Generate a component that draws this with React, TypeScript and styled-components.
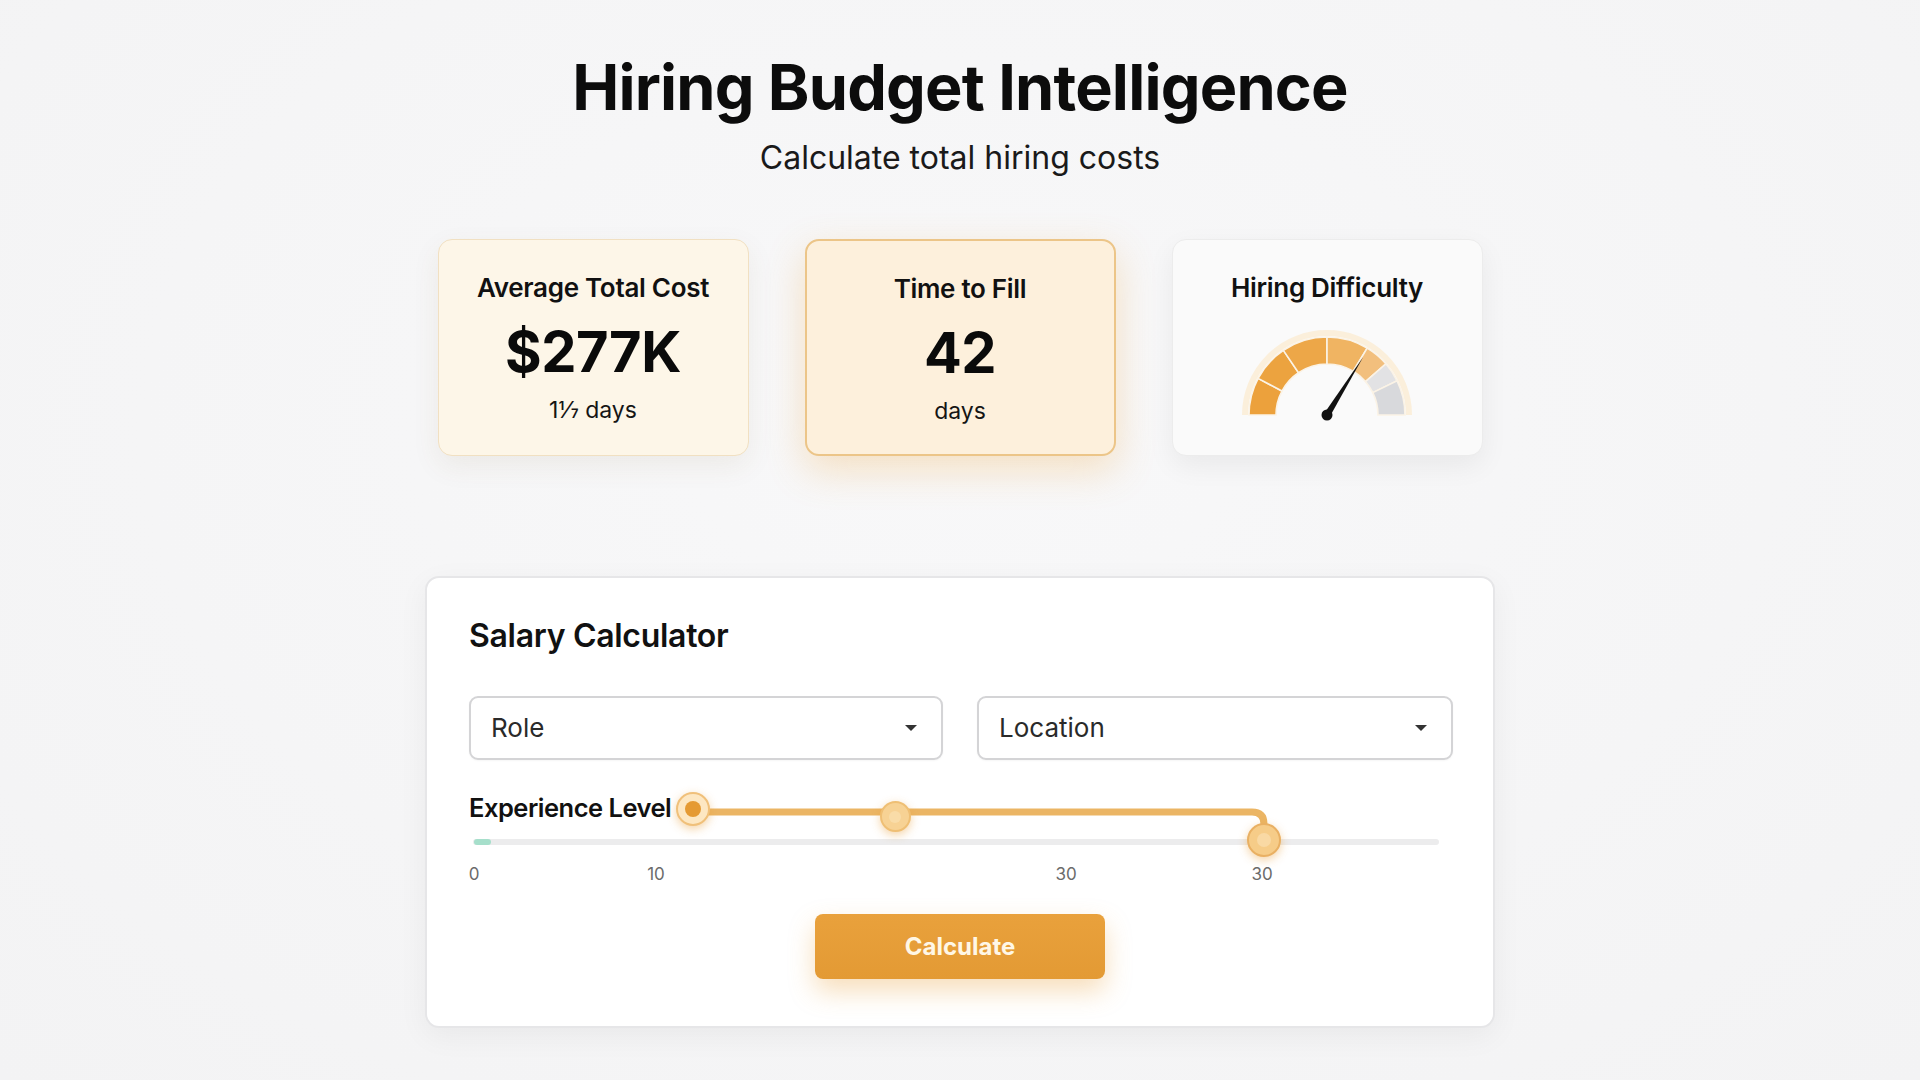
import React from "react";
import styled, { createGlobalStyle } from "styled-components";

const GlobalStyle = createGlobalStyle`
  html, body { margin: 0; padding: 0; background: #f5f5f6; }
  body { font-family: Inter, "Noto Sans", "Liberation Sans", sans-serif; color: #111; }
  * { box-sizing: border-box; }
`;

const Page = styled.div`
  min-height: 100vh;
  padding-top: 56px;
  display: flex;
  flex-direction: column;
  align-items: center;
  background: radial-gradient(ellipse at 50% 40%, #f8f8f9 0%, #f3f3f4 100%);
`;

const Title = styled.h1`
  margin: 0;
  font-size: 63px;
  line-height: 1;
  font-weight: 700;
  letter-spacing: -0.8px;
  color: #0c0c0c;
`;

const Subtitle = styled.p`
  margin: 20px 0 0;
  font-size: 32px;
  line-height: 1.2;
  font-weight: 400;
  color: #1a1a1a;
`;

const CardRow = styled.div`
  margin-top: 62px;
  display: grid;
  grid-template-columns: repeat(3, 311px);
  gap: 56px;
`;

const cardVariants = {
  cream: {
    bg: "#fdf6e8",
    border: "1.5px solid #f1e0c2",
    shadow: "0 10px 28px rgba(120, 90, 40, 0.08)",
  },
  highlight: {
    bg: "#fdf0dc",
    border: "2px solid #ecc588",
    shadow: "0 14px 38px rgba(240, 168, 70, 0.30)",
  },
  plain: {
    bg: "#fafafa",
    border: "1.5px solid #ececec",
    shadow: "0 10px 28px rgba(0, 0, 0, 0.06)",
  },
};

type Variant = keyof typeof cardVariants;

const Card = styled.div<{ $variant: Variant }>`
  height: 217px;
  border-radius: 14px;
  background: ${(p) => cardVariants[p.$variant].bg};
  border: ${(p) => cardVariants[p.$variant].border};
  box-shadow: ${(p) => cardVariants[p.$variant].shadow};
  padding-top: 32px;
  display: flex;
  flex-direction: column;
  align-items: center;
`;

const CardTitle = styled.div`
  font-size: 26px;
  line-height: 1.2;
  font-weight: 600;
  letter-spacing: -0.3px;
  color: #111;
`;

const CardValue = styled.div`
  margin-top: 20px;
  font-size: 56px;
  line-height: 1;
  font-weight: 700;
  color: #0a0a0a;
  letter-spacing: -0.5px;
`;

const CardUnit = styled.div`
  margin-top: 17px;
  font-size: 23px;
  line-height: 1.2;
  font-weight: 400;
  color: #151515;
`;

const GaugeWrap = styled.div`
  margin-top: 25px;
  width: 180px;
  height: 92px;
`;

const Panel = styled.section`
  margin-top: 120px;
  width: 1070px;
  background: #ffffff;
  border: 2px solid #e6e6e8;
  border-radius: 14px;
  box-shadow: 0 8px 30px rgba(0, 0, 0, 0.05);
  padding: 39px 42px 47px;
  display: flex;
  flex-direction: column;
`;

const PanelTitle = styled.h2`
  margin: 0;
  font-size: 32px;
  line-height: 1.2;
  font-weight: 600;
  letter-spacing: -0.3px;
  color: #111;
`;

const SelectRow = styled.div`
  margin-top: 40px;
  display: grid;
  grid-template-columns: 474px 476px;
  gap: 34px;
`;

const SelectBox = styled.div`
  height: 64px;
  border: 2px solid #d4d4d6;
  border-radius: 9px;
  background: #fff;
  display: flex;
  align-items: center;
  justify-content: space-between;
  padding: 0 24px 0 20px;
  font-size: 26px;
  color: #2a2a2a;
  box-shadow: 0 1px 2px rgba(0, 0, 0, 0.04);
`;

const Caret = styled.span`
  width: 0;
  height: 0;
  border-left: 6px solid transparent;
  border-right: 6px solid transparent;
  border-top: 6px solid #333;
`;

const SliderBlock = styled.div`
  position: relative;
  margin-top: 32px;
  display: flex;
  flex-direction: column;
`;

const SliderLabel = styled.div`
  font-size: 25.5px;
  line-height: 32px;
  font-weight: 600;
  color: #111;
  letter-spacing: -0.5px;
`;

const Track = styled.div`
  position: relative;
  margin: 15px 12px 0 4px;
  height: 6px;
  border-radius: 3px;
  background: #ececed;
`;

const TrackFill = styled.div`
  position: absolute;
  left: 1px;
  top: 0;
  width: 17px;
  height: 6px;
  border-radius: 3px;
  background: #a6dfcb;
`;

const TickRow = styled.div`
  position: relative;
  margin-top: 19px;
  height: 20px;
`;

const Tick = styled.span`
  position: absolute;
  top: 0;
  transform: translateX(-50%);
  font-size: 17px;
  line-height: 20px;
  color: #6b6b6b;
`;

const Connector = styled.svg`
  position: absolute;
  left: 0;
  top: 0;
  overflow: visible;
  pointer-events: none;
`;

const thumbStyles = {
  active: { size: 34, fill: "#fde7c2", border: "#f0c07a", dot: "#e59a33", dotSize: 16 },
  mid: { size: 31, fill: "#f7d294", border: "#efbf74", dot: "#f9dca8", dotSize: 12 },
  end: { size: 34, fill: "#f6cc88", border: "#e9b063", dot: "#f9d9a4", dotSize: 14 },
};

type ThumbKind = keyof typeof thumbStyles;

const Thumb = styled.div<{ $kind: ThumbKind }>`
  position: absolute;
  width: ${(p) => thumbStyles[p.$kind].size}px;
  height: ${(p) => thumbStyles[p.$kind].size}px;
  margin-left: ${(p) => -thumbStyles[p.$kind].size / 2}px;
  margin-top: ${(p) => -thumbStyles[p.$kind].size / 2}px;
  border-radius: 50%;
  background: ${(p) => thumbStyles[p.$kind].fill};
  border: 2.5px solid ${(p) => thumbStyles[p.$kind].border};
  box-shadow: 0 3px 10px rgba(232, 160, 60, 0.45);
  display: flex;
  align-items: center;
  justify-content: center;

  &::after {
    content: "";
    width: ${(p) => thumbStyles[p.$kind].dotSize}px;
    height: ${(p) => thumbStyles[p.$kind].dotSize}px;
    border-radius: 50%;
    background: ${(p) => thumbStyles[p.$kind].dot};
  }
`;

const ButtonRow = styled.div`
  margin-top: 30px;
  display: flex;
  justify-content: center;
`;

const CalcButton = styled.button`
  width: 290px;
  height: 65px;
  border: none;
  border-radius: 8px;
  background: linear-gradient(180deg, #e9a13c 0%, #e39a34 100%);
  color: #fff7e6;
  font-family: inherit;
  font-size: 24px;
  font-weight: 700;
  box-shadow: 0 12px 26px rgba(233, 160, 60, 0.35);
  cursor: pointer;
`;

function Gauge() {
  const cx = 90;
  const cy = 86;
  const ro = 78;
  const ri = 51;
  const segs: [number, number, string][] = [
    [180, 152, "#eca13c"],
    [152, 124, "#eca33f"],
    [124, 90, "#eda748"],
    [90, 59, "#f0b462"],
    [59, 41, "#f2bf7d"],
    [41, 26, "#e2e2e4"],
    [26, 0, "#d8d9dc"],
  ];
  const pt = (r: number, a: number) => {
    const rad = (a * Math.PI) / 180;
    return [cx + r * Math.cos(rad), cy - r * Math.sin(rad)];
  };
  const arc = (a1: number, a2: number) => {
    const [x1, y1] = pt(ro, a1);
    const [x2, y2] = pt(ro, a2);
    const [x3, y3] = pt(ri, a2);
    const [x4, y4] = pt(ri, a1);
    return `M${x1} ${y1} A${ro} ${ro} 0 0 1 ${x2} ${y2} L${x3} ${y3} A${ri} ${ri} 0 0 0 ${x4} ${y4} Z`;
  };
  const needleAngle = 58;
  const [tx, ty] = pt(68, needleAngle);
  const perp = ((needleAngle + 90) * Math.PI) / 180;
  const bw = 3.2;
  const bx1 = cx + bw * Math.cos(perp);
  const by1 = cy - bw * Math.sin(perp);
  const bx2 = cx - bw * Math.cos(perp);
  const by2 = cy + bw * Math.sin(perp);
  return (
    <svg width="180" height="92" viewBox="0 0 180 92">
      <path
        d={`M${cx - 82} ${cy} A82 82 0 0 1 ${cx + 82} ${cy}`}
        fill="none"
        stroke="#fbe7c6"
        strokeWidth="6"
        opacity="0.6"
      />
      {segs.map(([a1, a2, c], i) => (
        <path key={i} d={arc(a1, a2)} fill={c} stroke="#fbf3e6" strokeWidth="1.6" />
      ))}
      <polygon points={`${bx1},${by1} ${tx},${ty} ${bx2},${by2}`} fill="#111" />
      <circle cx={cx} cy={cy} r="5.5" fill="#111" />
    </svg>
  );
}

const ticks = [
  { label: "0", x: 5 },
  { label: "10", x: 187 },
  { label: "30", x: 597 },
  { label: "30", x: 793 },
];

const thumbs: { kind: ThumbKind; x: number; y: number }[] = [
  { kind: "active", x: 224, y: 17 },
  { kind: "mid", x: 426, y: 25 },
  { kind: "end", x: 795, y: 48 },
];

export default function App() {
  return (
    <>
      <GlobalStyle />
      <Page>
        <Title>Hiring Budget Intelligence</Title>
        <Subtitle>Calculate total hiring costs</Subtitle>

        <CardRow>
          <Card $variant="cream">
            <CardTitle>Average Total Cost</CardTitle>
            <CardValue>$277K</CardValue>
            <CardUnit>1⅐ days</CardUnit>
          </Card>
          <Card $variant="highlight">
            <CardTitle>Time to Fill</CardTitle>
            <CardValue>42</CardValue>
            <CardUnit>days</CardUnit>
          </Card>
          <Card $variant="plain">
            <CardTitle>Hiring Difficulty</CardTitle>
            <GaugeWrap>
              <Gauge />
            </GaugeWrap>
          </Card>
        </CardRow>

        <Panel>
          <PanelTitle>Salary Calculator</PanelTitle>
          <SelectRow>
            <SelectBox>
              <span>Role</span>
              <Caret />
            </SelectBox>
            <SelectBox>
              <span>Location</span>
              <Caret />
            </SelectBox>
          </SelectRow>

          <SliderBlock>
            <SliderLabel>Experience Level</SliderLabel>
            <Track>
              <TrackFill />
            </Track>
            <TickRow>
              {ticks.map((t, i) => (
                <Tick key={i} style={{ left: t.x }}>
                  {t.label}
                </Tick>
              ))}
            </TickRow>
            <Connector width="1" height="1">
              <path
                d="M224 20 H783 Q795 20 795 32 V46"
                fill="none"
                stroke="#ebb564"
                strokeWidth="7"
                strokeLinecap="round"
              />
            </Connector>
            {thumbs.map((t, i) => (
              <Thumb key={i} $kind={t.kind} style={{ left: t.x, top: t.y }} />
            ))}
          </SliderBlock>

          <ButtonRow>
            <CalcButton>Calculate</CalcButton>
          </ButtonRow>
        </Panel>
      </Page>
    </>
  );
}
